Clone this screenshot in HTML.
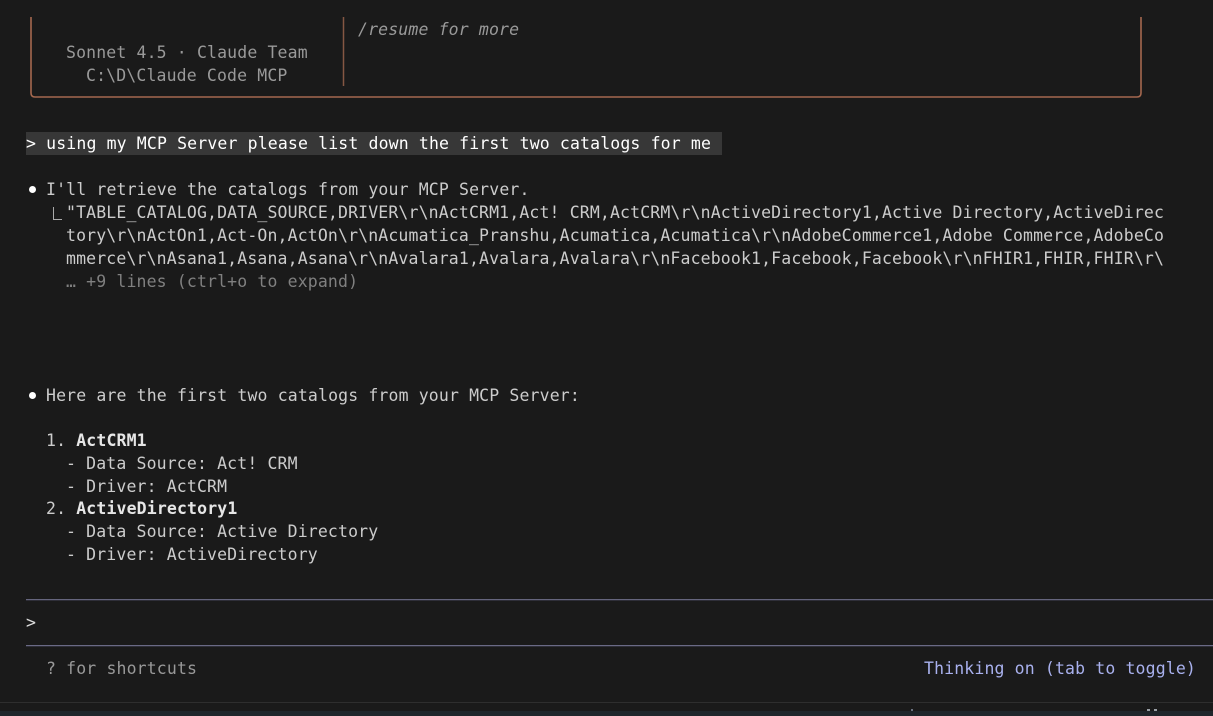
<!DOCTYPE html>
<html><head><meta charset="utf-8"><style>
html,body{margin:0;padding:0;background:#1a1a1a;width:1213px;height:716px;overflow:hidden}
body{position:relative;font-family:"DejaVu Sans Mono",monospace;font-size:16.5px;letter-spacing:0.14px;color:#cccccc}
.r{position:absolute;left:0;height:23px;line-height:23px;white-space:pre}
.d{color:#999}
.b{font-weight:bold;color:#e6e6e6}
.l{position:absolute}
</style></head><body>
<svg class="l" style="left:0;top:0" width="1213" height="110" viewBox="0 0 1213 110"><path d="M31 17V93Q31 97 35 97H1137Q1141 97 1141 93V17" fill="none" stroke="#a5684f" stroke-width="1.6"/><path d="M343.5 17V86" fill="none" stroke="#855743" stroke-width="1.5"/></svg>
<div class="r" style="left:358px;top:18px;color:#999;font-style:italic">/resume for more</div>
<div class="r d" style="left:66px;top:41px">Sonnet 4.5 · Claude Team</div>
<div class="r d" style="left:86px;top:64px">C:\D\Claude Code MCP</div>
<div class="l" style="left:26px;top:132px;width:696px;height:23px;background:#373737"></div>
<div class="r" style="left:26px;top:132px;color:#fff">&gt; using my MCP Server please list down the first two catalogs for me</div>
<div class="l" style="left:28.5px;top:186px;width:7px;height:7px;border-radius:50%;background:#fff"></div>
<div class="r" style="left:46px;top:178px">I'll retrieve the catalogs from your MCP Server.</div>
<div class="l" style="left:53px;top:207px;width:8px;height:12px;border:solid #aaa;border-width:0 0 1px 1px"></div>
<div class="r" style="left:66px;top:201px">"TABLE_CATALOG,DATA_SOURCE,DRIVER\r\nActCRM1,Act! CRM,ActCRM\r\nActiveDirectory1,Active Directory,ActiveDirec</div>
<div class="r" style="left:66px;top:224px">tory\r\nActOn1,Act-On,ActOn\r\nAcumatica_Pranshu,Acumatica,Acumatica\r\nAdobeCommerce1,Adobe Commerce,AdobeCo</div>
<div class="r" style="left:66px;top:247px">mmerce\r\nAsana1,Asana,Asana\r\nAvalara1,Avalara,Avalara\r\nFacebook1,Facebook,Facebook\r\nFHIR1,FHIR,FHIR\r\</div>
<div class="r" style="left:66px;top:270px;color:#808080">… +9 lines (ctrl+o to expand)</div>
<div class="l" style="left:28.5px;top:392px;width:7px;height:7px;border-radius:50%;background:#fff"></div>
<div class="r" style="left:46px;top:384px">Here are the first two catalogs from your MCP Server:</div>
<div class="r" style="left:46px;top:429px">1. <span class="b">ActCRM1</span></div>
<div class="r" style="left:66px;top:452px">- Data Source: Act! CRM</div>
<div class="r" style="left:66px;top:475px">- Driver: ActCRM</div>
<div class="r" style="left:46px;top:497px">2. <span class="b">ActiveDirectory1</span></div>
<div class="r" style="left:66px;top:520px">- Data Source: Active Directory</div>
<div class="r" style="left:66px;top:543px">- Driver: ActiveDirectory</div>
<div class="l" style="left:26px;top:599px;width:1187px;height:1px;background:#65657d;box-shadow:0 1px 0 #2e2e38"></div>
<div class="r" style="left:26px;top:611px;color:#ddd">&gt;</div>
<div class="l" style="left:26px;top:645px;width:1187px;height:1px;background:#6a6a85;box-shadow:0 1px 0 #2e2e38"></div>
<div class="r d" style="left:46px;top:657px">? for shortcuts</div>
<div class="r" style="left:924px;top:657px;color:#a9b1ee">Thinking on (tab to toggle)</div>
<div class="l" style="left:0;top:702px;width:1213px;height:1px;background:#2e2e2e"></div>
<div class="l" style="left:0;top:711px;width:1213px;height:5px;background:#1f262b"></div>
<div class="l" style="left:911px;top:709px;width:2px;height:2px;background:#6b7280"></div>
<div class="l" style="left:1147px;top:709px;width:3px;height:2px;background:#9aa0a6"></div>
<div class="l" style="left:1154px;top:709px;width:3px;height:2px;background:#9aa0a6"></div>
</body></html>
